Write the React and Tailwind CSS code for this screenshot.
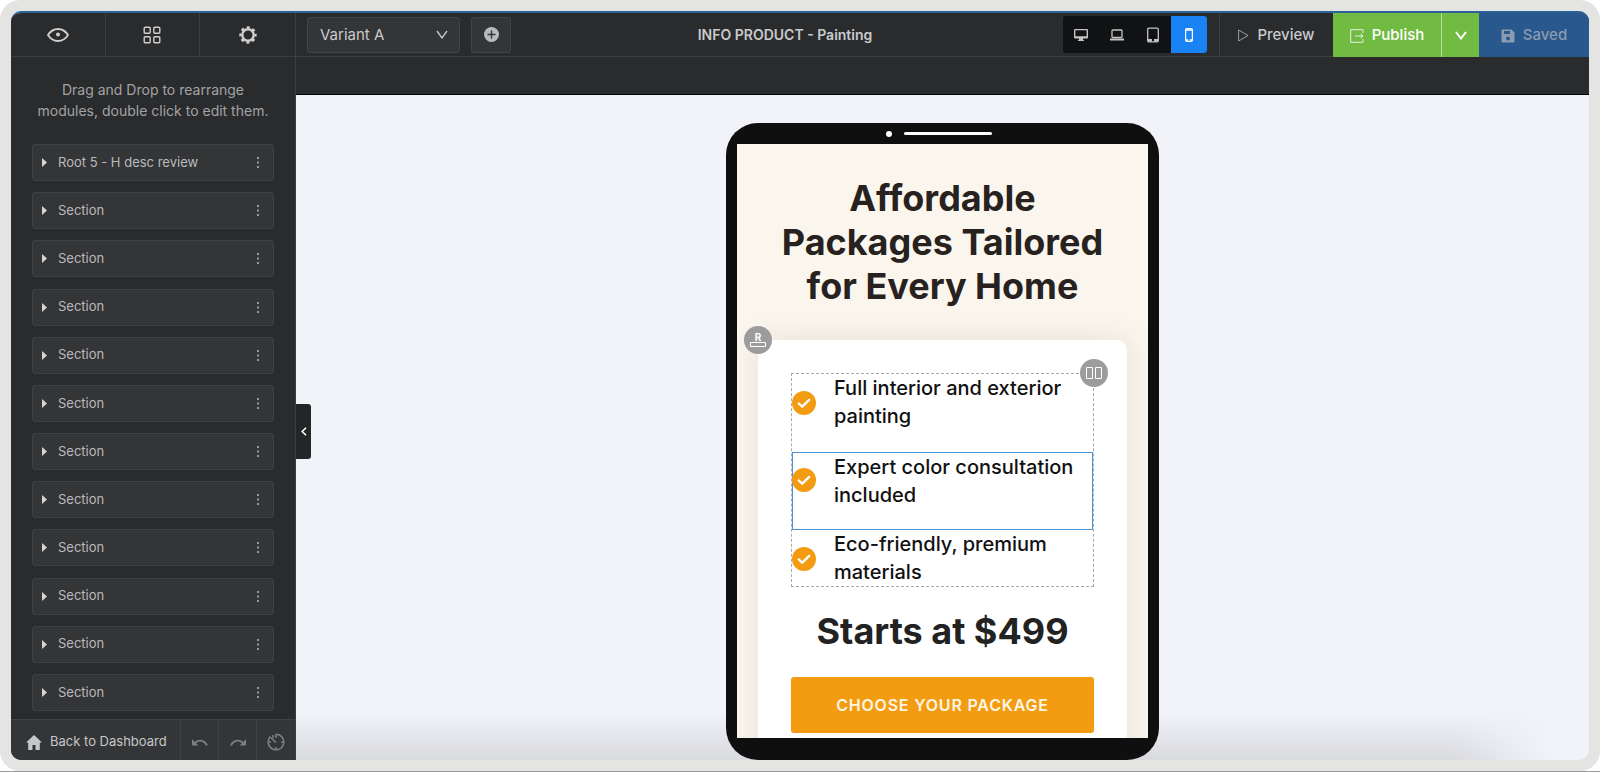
import { useState } from 'react'

const modules = [
  'Root 5 - H desc review',
  'Section',
  'Section',
  'Section',
  'Section',
  'Section',
  'Section',
  'Section',
  'Section',
  'Section',
  'Section',
  'Section',
]

const features = [
  'Full interior and exterior painting',
  'Expert color consultation included',
  'Eco-friendly, premium materials',
]

const EyeIcon = () => (
  <svg width="22" height="16" viewBox="0 0 22 16" fill="none" stroke="currentColor" strokeWidth="1.8">
    <path d="M1 8C3.500 4 7 2 11 2s7.500 2 10 6c-2.500 4-6 6-10 6S3.500 12 1 8Z" strokeLinejoin="round" />
    <circle cx="11" cy="7.500" r="2" fill="currentColor" stroke="none" />
  </svg>
)

const GridIcon = () => (
  <svg width="18" height="18" viewBox="0 0 18 18" fill="none" stroke="currentColor" strokeWidth="1.400">
    <rect x="1.200" y="1.200" width="6" height="6" rx="1" />
    <rect x="10.800" y="1.200" width="6" height="6" rx="1" />
    <rect x="1.200" y="10.800" width="6" height="6" rx="1" />
    <rect x="10.800" y="10.800" width="6" height="6" rx="1" />
  </svg>
)

const GearIcon = () => (
  <svg width="18" height="18" viewBox="0 0 18 18" fill="none" stroke="currentColor">
    <circle cx="9" cy="9" r="5.700" strokeWidth="2.400" />
    <circle cx="9" cy="9" r="7.500" strokeWidth="2.400" strokeDasharray="3 2.890" strokeDashoffset="1.500" />
  </svg>
)

const DesktopIcon = () => (
  <svg width="14" height="14" viewBox="0 0 14 14" fill="currentColor">
    <path fillRule="evenodd" d="M1 1h12a1 1 0 0 1 1 1v7.500a1 1 0 0 1-1 1H9v1.200l1 .6V13H4v-.7l1-.6v-1.200H1a1 1 0 0 1-1-1V2a1 1 0 0 1 1-1Zm.4 1.300v6h11.200v-6Z" />
  </svg>
)

const LaptopIcon = () => (
  <svg width="14" height="14" viewBox="0 0 14 14" fill="none" stroke="currentColor">
    <rect x="2" y="2" width="10" height="7.500" rx=".8" strokeWidth="1.300" />
    <path d="M0 11.500h14" strokeWidth="1.800" />
  </svg>
)

const TabletIcon = () => (
  <svg width="14" height="16" viewBox="0 0 14 16" fill="none" stroke="currentColor">
    <rect x="1.700" y="1.200" width="10.600" height="13.600" rx="1.200" strokeWidth="1.300" />
    <path d="M2 13.200h4M8 13.200h4" strokeWidth="2.600" />
  </svg>
)

const PhoneIcon = () => (
  <svg width="10" height="16" viewBox="0 0 10 16" fill="none" stroke="currentColor">
    <rect x="1.600" y="1.600" width="6.800" height="12.800" rx="1.200" strokeWidth="1.200" />
    <path d="M2 3h6M2 13h2.200M5.800 13H8" strokeWidth="1.600" />
  </svg>
)

const PublishIcon = () => (
  <svg width="14" height="14" viewBox="0 0 14 14" fill="none" stroke="currentColor" strokeOpacity=".8">
    <path d="M13 4V.7H.7v12.600H13V10M5 7h8M10.500 4.800 13 7l-2.500 2.200" />
  </svg>
)

const SaveIcon = () => (
  <svg width="14" height="14" viewBox="0 0 14 14" fill="currentColor">
    <path fillRule="evenodd" d="M1.500.5h9L13.500 3.500v9a1 1 0 0 1-1 1h-11a1 1 0 0 1-1-1v-11a1 1 0 0 1 1-1ZM3 2v3h6V2Zm4 5.500a2 2 0 1 0 0 4 2 2 0 0 0 0-4Z" />
  </svg>
)

const HomeIcon = () => (
  <svg width="16" height="15" viewBox="0 0 16 15" fill="currentColor">
    <path d="M8 0 0 7.500h2.200V15h4.300v-5h3v5h4.300V7.500H16Z" />
  </svg>
)

const UndoIcon = ({ className }) => (
  <svg className={className} width="16" height="9" viewBox="0 0 16 9" fill="currentColor">
    <path d="M0 1v6.500h6.500L4 5.200C5.200 4.200 6.600 3.600 8.200 3.600c2.700 0 4.900 1.700 5.800 4.200l1.800-.6C14.600 4 11.700 1.800 8.200 1.800c-2.100 0-4 .8-5.500 2.100Z" />
  </svg>
)

const HistoryIcon = () => (
  <svg width="18" height="18" viewBox="0 0 18 18" fill="none" stroke="currentColor" strokeWidth="1.500">
    <path d="M9 1.200A7.800 7.800 0 1 1 3 4L9 9.500" />
    <path d="M9 1v4M17 9h-3M9 17v-3M1 9h3M6 2v3" />
  </svg>
)

const CheckIcon = () => (
  <svg className="shrink-0" width="24" height="24" viewBox="0 0 24 24">
    <circle cx="12" cy="12" r="12" fill="#f39c12" />
    <path d="m6.800 12.500 3.400 3.200 7-6.800" fill="none" stroke="#fff" strokeWidth="2.400" strokeLinecap="round" strokeLinejoin="round" />
  </svg>
)

const devices = [
  { name: 'Desktop', Icon: DesktopIcon },
  { name: 'Laptop', Icon: LaptopIcon },
  { name: 'Tablet', Icon: TabletIcon },
  { name: 'Phone', Icon: PhoneIcon },
]

const Sidebar = () => (
  <aside className="flex w-[285px] shrink-0 flex-col border-r border-[#3d3e40] bg-[#2a2b2d] text-[#b9babc]">
    <nav className="grid h-11 shrink-0 grid-cols-3 divide-x divide-[#3d3e40] border-b border-[#3d3e40] text-[#cfcfcf]">
      <button aria-label="Preview modules" className="flex items-center justify-center"><EyeIcon /></button>
      <button aria-label="Modules" className="flex items-center justify-center"><GridIcon /></button>
      <button aria-label="Settings" className="flex items-center justify-center"><GearIcon /></button>
    </nav>
    <p className="px-6 pt-[22px] text-center text-sm leading-[21px] text-[#a2a3a5]">
      Drag and Drop to rearrange modules, double click to edit them.
    </p>
    <ul className="flex min-h-0 flex-1 flex-col justify-between px-[21px] pt-[23px] pb-2">
      {modules.map((name, index) => (
        <li key={index} className="flex h-[37px] items-center rounded-[3px] border border-[#404143] bg-[#343537] pr-2 pl-[9px]">
          <button aria-label={`Expand ${name}`} className="w-4">
            <svg width="5" height="9" viewBox="0 0 5 9" fill="#d6d6d6"><path d="M0 0 5 4.500 0 9Z" /></svg>
          </button>
          <span className="flex-1 text-[13px]">{name}</span>
          <button aria-label={`${name} options`} className="flex w-[15px] justify-center">
            <svg width="2" height="11" viewBox="0 0 2 11" fill="#9a9a9a">
              <path d="M0 0h2v2H0ZM0 4.500h2v2H0ZM0 9h2v2H0Z" />
            </svg>
          </button>
        </li>
      ))}
    </ul>
    <footer className="flex h-[41px] shrink-0 divide-x divide-[#414244] border-t border-[#414244] bg-[#343537] text-[#7e7f81]">
      <a href="#dashboard" className="flex flex-1 items-center gap-2 pt-1 pl-[15px] text-[13px] text-[#c6c7c9]">
        <HomeIcon />
        Back to Dashboard
      </a>
      <button aria-label="Undo" className="flex w-[38px] items-center justify-center pt-1"><UndoIcon /></button>
      <button aria-label="Redo" className="flex w-[38px] items-center justify-center pt-1"><UndoIcon className="-scale-x-100" /></button>
      <button aria-label="History" className="flex w-[38px] items-center justify-center pt-1"><HistoryIcon /></button>
    </footer>
  </aside>
)

const Toolbar = ({ device, setDevice }) => (
  <header className="flex h-11 shrink-0 items-center border-b border-[#3d3e40] bg-[#2a2b2d] text-[#c9cacc]">
    <div className="relative ml-[11px]">
      <select aria-label="Variant" className="block h-9 w-[153px] appearance-none rounded-[3px] border border-[#434446] bg-[#343537] pr-8 pl-3 text-[15px] leading-6">
        <option>Variant A</option>
      </select>
      <svg className="pointer-events-none absolute top-[13px] right-3" width="12" height="9" viewBox="0 0 12 9" fill="none" stroke="currentColor" strokeWidth="1.300">
        <path d="m1 1 5 7 5-7" />
      </svg>
    </div>
    <button aria-label="Add variant" className="ml-[11px] flex h-9 w-10 items-center justify-center rounded-[3px] border border-[#434446] bg-[#343537]">
      <svg width="15" height="15" viewBox="0 0 15 15">
        <circle cx="7.500" cy="7.500" r="7.500" fill="#b9babb" />
        <path d="M7.500 3.500v8M3.500 7.500h8" stroke="#343537" strokeWidth="1.500" />
      </svg>
    </button>
    <h1 className="flex-1 pr-1 text-center text-sm font-semibold">INFO PRODUCT - Painting</h1>
    <div className="flex h-[37px] overflow-hidden rounded-[3px] bg-[#111214]">
      {devices.map(({ name, Icon }) => (
        <button
          key={name}
          aria-label={name}
          aria-pressed={device === name}
          onClick={() => setDevice(name)}
          className={`flex w-9 items-center justify-center ${device === name ? 'bg-[#1a83f3] text-white' : 'text-[#c4c4c4]'}`}
        >
          <Icon />
        </button>
      ))}
    </div>
    <button className="ml-3 flex h-11 w-[114px] items-center justify-center gap-2 border-l border-[#3d3e40] pt-0.5 text-[15px] font-medium">
      <svg width="11" height="13" viewBox="0 0 11 13" fill="none" stroke="currentColor" strokeOpacity=".7"><path d="M.6 1v11L10 6.500Z" /></svg>
      Preview
    </button>
    <button className="flex h-11 w-[108px] items-center justify-center gap-2 bg-[#72bb43] pt-0.5 text-[15px] font-medium text-white">
      <PublishIcon />
      Publish
    </button>
    <button aria-label="Publish options" className="flex h-11 w-[38px] items-center justify-center border-l border-[#b5dc9b] bg-[#72bb43] pt-0.5 text-white">
      <svg width="12" height="9" viewBox="0 0 12 9" fill="none" stroke="currentColor" strokeWidth="2"><path d="m1 1 5 6.500L11 1" /></svg>
    </button>
    <button className="flex h-11 w-[110px] items-center justify-center gap-2 bg-[#29588f] pt-0.5 text-[15px] font-medium text-[#8c9bb0]">
      <SaveIcon />
      Saved
    </button>
  </header>
)

const PackageCard = () => (
  <section className="relative mx-[21px] mt-8 rounded-t-[10px] bg-white px-[33px] pt-[33px] pb-10 shadow-[0_0_30px_rgba(120,90,60,0.14)]">
    <div className="absolute -top-[14px] -left-[14px] flex size-7 items-center justify-center rounded-full bg-[#9c9c9c] text-white">
      <div className="flex flex-col items-center">
        <span className="text-[10px] leading-[8px] font-bold">R</span>
        <svg width="16" height="6" viewBox="0 0 16 6" fill="none" stroke="currentColor"><path d="M.5 1.500h15v4H.5Z" /></svg>
      </div>
    </div>
    <div className="relative border border-dashed border-[#a9a9a9]">
      <div className="absolute -top-[15px] -right-[15px] flex size-7 items-center justify-center rounded-full bg-[#9c9c9c] text-white">
        <svg width="16" height="12" viewBox="0 0 16 12" fill="none" stroke="currentColor"><path d="M.5.5h6v11h-6ZM9.500.5h6v11h-6Z" /></svg>
      </div>
      <ul>
        {features.map((feature, index) => (
          <li
            key={feature}
            className={`flex items-start gap-[18px] ${index === 1 ? 'h-[78px] border border-[#4a94d8]' : ''} ${index === 0 ? 'h-[78px]' : ''}`}
          >
            <span className={index === 1 ? '-ml-px pt-[15px]' : 'pt-[17px]'}><CheckIcon /></span>
            <span className="flex-1 text-xl leading-7 font-medium text-[#111]">{feature}</span>
          </li>
        ))}
      </ul>
    </div>
    <p className="mt-[22px] text-center text-4xl leading-11 font-bold text-[#222]">Starts at $499</p>
    <a href="#packages" className="mt-6 flex h-14 items-center justify-center rounded-[3px] bg-[#f39c12] font-semibold tracking-wider text-[#fff6e2]">
      CHOOSE YOUR PACKAGE
    </a>
  </section>
)

const PhoneFrame = () => (
  <div className="flex h-full w-[433px] flex-col rounded-[32px] bg-[#0f0f0f] px-[11px] pb-[22px]">
    <div className="flex h-[21px] shrink-0 items-center justify-center gap-3 pr-2">
      <span className="size-[6px] rounded-full bg-white" />
      <span className="h-[3px] w-[88px] rounded-full bg-white" />
    </div>
    <main className="min-h-0 flex-1 overflow-hidden bg-[#faf6ee]">
      <h2 className="px-6 pt-8 text-center text-4xl leading-11 font-bold text-[#272220]">
        Affordable Packages Tailored for Every Home
      </h2>
      <PackageCard />
    </main>
  </div>
)

const App = () => {
  const [device, setDevice] = useState('Phone')

  return (
    <div className="h-screen bg-white font-['Inter','Liberation_Sans',sans-serif]">
      <div className="h-full border-b border-[#999]">
        <div className="h-full rounded-[20px] bg-[#e4e4e3] p-[11px]">
          <div className="flex h-full overflow-hidden rounded-[10px] border-t-2 border-[#2b6298] bg-[#f2f3f8]">
            <Sidebar />
            <div className="flex min-w-0 flex-1 flex-col">
              <Toolbar device={device} setDevice={setDevice} />
              <div className="h-[38px] shrink-0 border-b border-black bg-[#2a2b2d]" />
              <div className="relative flex min-h-0 flex-1 justify-center pt-7">
                <button aria-label="Collapse sidebar" className="absolute top-[309px] left-0 flex h-[55px] w-[15px] items-center justify-center rounded-r-[3px] bg-[#242527] text-white">
                  <svg width="6" height="9" viewBox="0 0 6 9" fill="none" stroke="currentColor" strokeWidth="1.600"><path d="M5 .8 1.200 4.500 5 8.200" /></svg>
                </button>
                <div className="pointer-events-none absolute bottom-0 left-0 h-12 w-[97%] bg-linear-to-t from-black/10 to-transparent mask-r-from-92%" />
                <div className="relative"><PhoneFrame /></div>
              </div>
            </div>
          </div>
        </div>
      </div>
    </div>
  )
}

export default App
